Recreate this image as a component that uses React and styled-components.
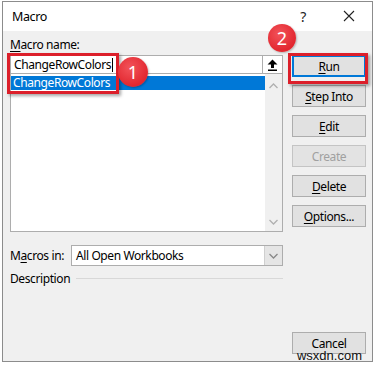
import React from "react"
import styled, { createGlobalStyle, css } from "styled-components"

const GlobalStyle = createGlobalStyle`
  body {
    margin: 0;
    background: #ffffff;
    font-family: "Noto Sans", "Open Sans", sans-serif;
    font-size: 12px;
    letter-spacing: -0.4px;
    color: #000;
  }
`

const Window = styled.div`
  position: relative;
  box-sizing: border-box;
  width: 371px;
  height: 361px;
  margin: 1px 0 0 2px;
  border: 1px solid #8c8c8c;
  background: #f0f0f0;
  display: flex;
  flex-direction: column;
`

const TitleBar = styled.div`
  height: 29px;
  background: #ffffff;
  display: flex;
  align-items: center;
  padding: 0 0 0 9px;
  font-size: 12.5px;
`

const Title = styled.span`
  flex: 1;
`

const TitleIcon = styled.span`
  width: 46px;
  text-align: center;
  font-size: 14px;
  color: #222;
`

const Body = styled.div`
  flex: 1;
  display: flex;
  padding: 6px 6px 0 7px;
  gap: 9px;
`

const LeftColumn = styled.div`
  width: 273px;
  display: flex;
  flex-direction: column;
`

const Label = styled.div`
  height: 18px;
  line-height: 16px;
`

const U = styled.span`
  text-decoration: underline;
  text-underline-offset: 2px;
`

const NameRow = styled.div`
  display: flex;
  height: 18px;
`

const NameInput = styled.div`
  flex: 1;
  box-sizing: border-box;
  background: #fff;
  border: 1px solid #adadad;
  border-right: none;
  border-bottom: none;
  padding-left: 3px;
  line-height: 17px;
  display: flex;
  align-items: center;
`

const Caret = styled.span`
  display: inline-block;
  width: 1px;
  height: 14px;
  background: #000;
  margin-left: 1px;
`

const UpButton = styled.div`
  width: 21px;
  box-sizing: border-box;
  background: #fff;
  border: 1px solid #adadad;
  border-bottom: none;
  display: flex;
  align-items: center;
  justify-content: center;
`

const ListBox = styled.div`
  height: 159px;
  box-sizing: border-box;
  border: 1px solid #adadad;
  background: #fff;
  display: flex;
`

const ListItems = styled.div`
  flex: 1;
  padding-top: 2px;
`

const ListItem = styled.div`
  height: 14px;
  line-height: 14px;
  padding-left: 2px;
  background: ${p => (p.selected ? "#0078d7" : "transparent")};
  color: ${p => (p.selected ? "#fff" : "#000")};
`

const ScrollBar = styled.div`
  width: 17px;
  background: #f0f0f0;
  display: flex;
  flex-direction: column;
  justify-content: space-between;
  align-items: center;
  padding: 9px 0 6px;
`

const MacrosRow = styled.div`
  display: flex;
  align-items: center;
  margin-top: 13px;
  height: 21px;
`

const RowLabel = styled.div`
  width: 61px;
`

const Combo = styled.div`
  flex: 1;
  height: 21px;
  box-sizing: border-box;
  background: #fff;
  border: 1px solid #adadad;
  display: flex;
  align-items: center;
  padding-left: 4px;
`

const ComboText = styled.span`
  flex: 1;
`

const ComboArrow = styled.div`
  width: 17px;
  height: 19px;
  background: #e5e5e5;
  border-left: 1px solid #cfcfcf;
  display: flex;
  align-items: center;
  justify-content: center;
`

const DescRow = styled.div`
  display: flex;
  align-items: center;
  margin-top: 3px;
  height: 18px;
`

const DescLine = styled.div`
  flex: 1;
  height: 1px;
  background: #d8d8d8;
  margin-left: 6px;
`

const RightColumn = styled.div`
  width: 74px;
  display: flex;
  flex-direction: column;
  gap: 8px;
  padding-top: 18px;
`

const Button = styled.div`
  box-sizing: border-box;
  height: 22px;
  background: #e1e1e1;
  border: 1px solid #adadad;
  display: flex;
  align-items: center;
  justify-content: center;
  ${p =>
    p.focused &&
    css`
      border: 2px solid #0078d7;
    `}
  ${p =>
    p.disabled &&
    css`
      color: #a0a0a0;
      background: #e3e3e3;
      border-color: #c4c4c4;
    `}
`

const Footer = styled.div`
  display: flex;
  justify-content: flex-end;
  padding: 0 6px 7px 0;
  height: 29px;
  box-sizing: border-box;
`

const CancelButton = styled(Button)`
  width: 74px;
  height: 22px;
`

const Watermark = styled.div`
  position: absolute;
  right: 10px;
  bottom: -2px;
  font-family: "Liberation Sans", Arial, sans-serif;
  font-size: 13px;
  letter-spacing: 0;
  color: #111;
  line-height: 14px;
`

const Highlight = styled.div`
  position: absolute;
  box-sizing: border-box;
  border: 3px solid #dc1f2a;
  box-shadow: 2px 2px 3px rgba(0, 0, 0, 0.35);
`

const Badge = styled.div`
  position: absolute;
  width: ${p => p.size}px;
  height: ${p => p.size}px;
  border-radius: 50%;
  background: radial-gradient(circle at 40% 35%, #f2535a, #e2272f 70%);
  color: #fff;
  font-size: 18px;
  letter-spacing: 0;
  display: flex;
  align-items: center;
  justify-content: center;
  box-shadow: 1px 1px 2px rgba(0, 0, 0, 0.25);
`

const Chevron = ({ down, color = "#b0b0b0" }) => (
  <svg width="9" height="6" viewBox="0 0 9 6">
    <path
      d={down ? "M0.5 1 L4.5 5 L8.5 1" : "M0.5 5 L4.5 1 L8.5 5"}
      fill="none"
      stroke={color}
      strokeWidth="1.3"
    />
  </svg>
)

const UpArrowIcon = () => (
  <svg width="11" height="12" viewBox="0 0 11 12">
    <path d="M5.5 0.5 L10.5 5.5 L7 5.5 L7 9 L4 9 L4 5.5 L0.5 5.5 Z" fill="#000" />
    <rect x="1" y="10.5" width="9" height="1.5" fill="#000" />
  </svg>
)

const buttons = [
  { label: "un", key: "R", focused: true },
  { label: "tep Into", key: "S" },
  { label: "dit", key: "E" },
  { label: "Create", disabled: true },
  { label: "elete", key: "D" },
  { label: "ptions...", key: "O" },
]

export default function App() {
  return (
    <>
      <GlobalStyle />
      <Window>
        <TitleBar>
          <Title>Macro</Title>
          <TitleIcon>?</TitleIcon>
          <TitleIcon>
            <svg width="12" height="12" viewBox="0 0 12 12">
              <path d="M1 1 L11 11 M11 1 L1 11" stroke="#222" strokeWidth="1.1" />
            </svg>
          </TitleIcon>
        </TitleBar>
        <Body>
          <LeftColumn>
            <Label>
              <U>M</U>acro name:
            </Label>
            <NameRow>
              <NameInput>
                ChangeRowColors
                <Caret />
              </NameInput>
              <UpButton>
                <UpArrowIcon />
              </UpButton>
            </NameRow>
            <ListBox>
              <ListItems>
                <ListItem selected>ChangeRowColors</ListItem>
              </ListItems>
              <ScrollBar>
                <Chevron />
                <Chevron down />
              </ScrollBar>
            </ListBox>
            <MacrosRow>
              <RowLabel>
                M<U>a</U>cros in:
              </RowLabel>
              <Combo>
                <ComboText>All Open Workbooks</ComboText>
                <ComboArrow>
                  <Chevron down color="#888" />
                </ComboArrow>
              </Combo>
            </MacrosRow>
            <DescRow>
              Description
              <DescLine />
            </DescRow>
          </LeftColumn>
          <RightColumn>
            {buttons.map(b => (
              <Button key={b.label} focused={b.focused} disabled={b.disabled}>
                {b.key && <U>{b.key}</U>}
                {b.label}
              </Button>
            ))}
          </RightColumn>
        </Body>
        <Footer>
          <CancelButton>Cancel</CancelButton>
        </Footer>
        <Watermark>wsxdn.com</Watermark>
        <Highlight style={{ left: 4, top: 51, width: 112, height: 41 }} />
        <Badge size={30} style={{ left: 115, top: 55 }}>1</Badge>
        <Highlight style={{ left: 285, top: 51, width: 80, height: 31 }} />
        <Badge size={28} style={{ left: 265, top: 22 }}>2</Badge>
      </Window>
    </>
  )
}
